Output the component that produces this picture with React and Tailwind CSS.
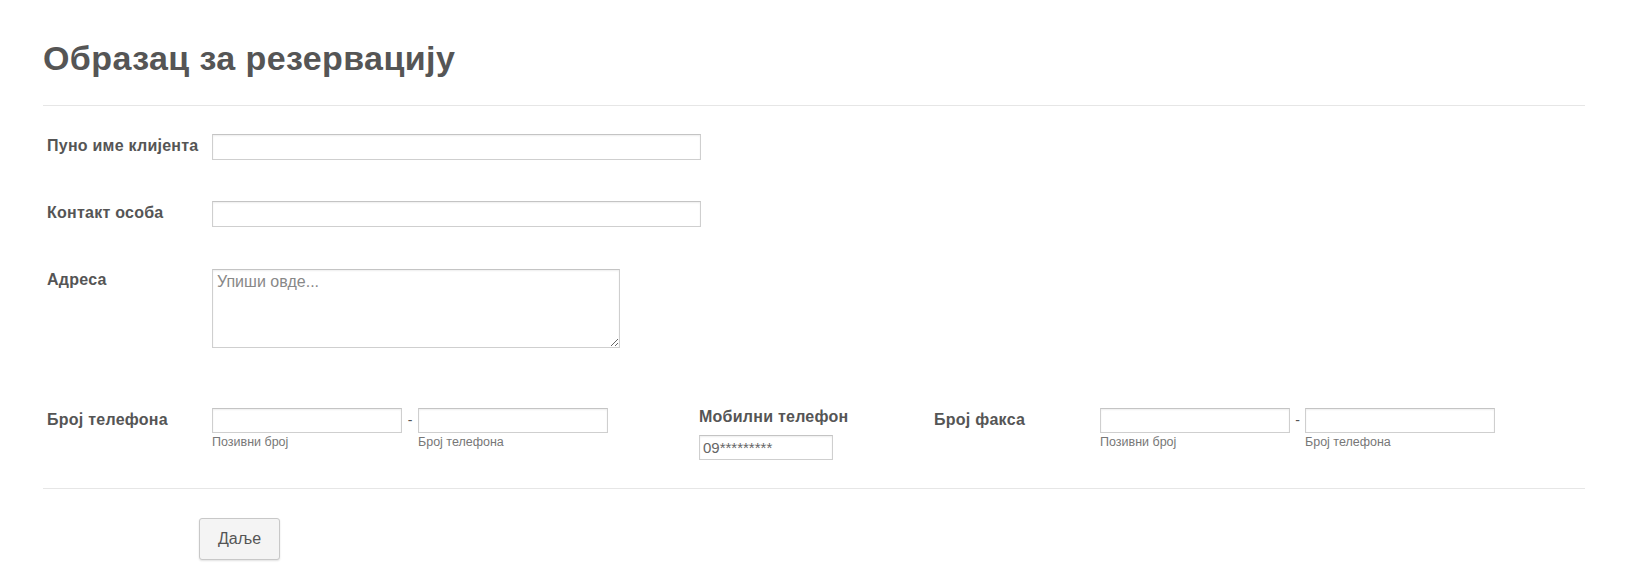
export default function App() {
  const font = { fontFamily: '"Liberation Sans", Arial, sans-serif' };
  const inputCls =
    "border border-[#cfcfcf] border-t-[#c4c4c4] bg-white shadow-[inset_0_1px_2px_rgba(0,0,0,0.07)] outline-none";
  const labelCls = "text-[16px] leading-[20px] font-bold tracking-[0.25px]";
  const subCls = "mt-[2px] text-[12.5px] leading-[14px] text-[#777]";

  return (
    <div className="min-h-screen bg-white text-[#555]" style={font}>
      <div className="px-[43px] pt-[39px]">
        {/* Header */}
        <div className="border-b border-[#e6e6e6] pb-[28px]">
          <h1 className="text-[34px] leading-[38px] font-bold tracking-[0.4px] text-[#555]">Образац за резервацију</h1>
        </div>

        {/* Client name */}
        <div className="flex items-start mt-[28px]">
          <label className={`w-[169px] pl-[4px] mt-[2px] ${labelCls}`}>Пуно име клијента</label>
          <input type="text" className={`${inputCls} w-[489px] h-[26px]`} />
        </div>

        {/* Contact */}
        <div className="flex items-start mt-[41px]">
          <label className={`w-[169px] pl-[4px] mt-[2px] ${labelCls}`}>Контакт особа</label>
          <input type="text" className={`${inputCls} w-[489px] h-[26px]`} />
        </div>

        {/* Address */}
        <div className="flex items-start mt-[42px]">
          <label className={`w-[169px] pl-[4px] mt-[1px] ${labelCls}`}>Адреса</label>
          <textarea
            placeholder="Упиши овде..."
            className={`${inputCls} w-[408px] h-[79px] px-[4px] py-[2px] text-[16px] leading-[20px] placeholder:text-[#888]`}
          />
        </div>

        {/* Phones */}
        <div className="flex items-start mt-[60px]">
          <div className="flex items-start w-[656px]">
            <label className={`w-[169px] pl-[4px] mt-[2px] ${labelCls}`}>Број телефона</label>
            <div className="flex items-start">
              <div className="flex flex-col">
                <input type="text" className={`${inputCls} w-[190px] h-[25px]`} />
                <span className={subCls}>Позивни број</span>
              </div>
              <span className="w-[16px] text-center text-[14px] leading-[25px]">-</span>
              <div className="flex flex-col">
                <input type="text" className={`${inputCls} w-[190px] h-[25px]`} />
                <span className={subCls}>Број телефона</span>
              </div>
            </div>
          </div>

          <div className="flex flex-col w-[235px] -mt-[1px]">
            <label className={labelCls}>Мобилни телефон</label>
            <input
              type="text"
              defaultValue="09*********"
              className={`${inputCls} mt-[8px] w-[134px] h-[25px] px-[3px] text-[15px] text-[#666]`}
            />
          </div>

          <div className="flex items-start">
            <label className={`w-[166px] mt-[2px] ${labelCls}`}>Број факса</label>
            <div className="flex items-start">
              <div className="flex flex-col">
                <input type="text" className={`${inputCls} w-[190px] h-[25px]`} />
                <span className={subCls}>Позивни број</span>
              </div>
              <span className="w-[15px] text-center text-[14px] leading-[25px]">-</span>
              <div className="flex flex-col">
                <input type="text" className={`${inputCls} w-[190px] h-[25px]`} />
                <span className={subCls}>Број телефона</span>
              </div>
            </div>
          </div>
        </div>

        {/* Footer */}
        <div className="mt-[28px] border-t border-[#e6e6e6] pt-[29px] pl-[156px]">
          <button className="w-[81px] h-[42px] rounded-[3px] border border-[#c8c8c8] bg-[#f4f4f4] text-[16px] text-[#555] shadow-[0_1px_2px_rgba(0,0,0,0.12)]">
            Даље
          </button>
        </div>
      </div>
    </div>
  );
}
